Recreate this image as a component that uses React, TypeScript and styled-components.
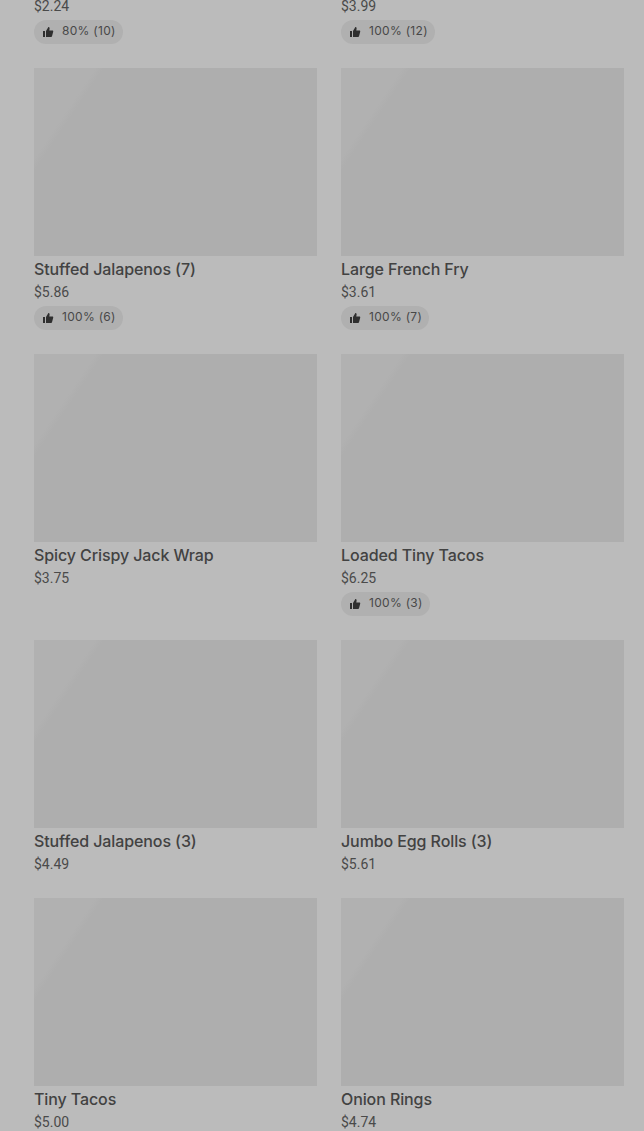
import React from 'react';
import styled, { createGlobalStyle } from 'styled-components';

const GlobalStyle = createGlobalStyle`
    html, body {
        margin: 0;
        padding: 0;
        height: 1131px;
        overflow: hidden;
        background-color: #bbbbbb;
    }
`

const Grid = styled.div`
    display: grid;
    grid-template-columns: 283px 283px;
    column-gap: 24px;
    row-gap: 24px;
    padding-left: 34px;
    margin-top: -4px;
    font-family: Inter, "Liberation Sans", sans-serif;
`

const Card = styled.div`
    display: flex;
    flex-direction: column;
    align-items: flex-start;
`

const Thumb = styled.div`
    width: 283px;
    height: 188px;
    background: linear-gradient(124deg, #b1b1b1 0%, #b1b1b1 15%, #aeaeae 17%, #aeaeae 100%);
`

const Name = styled.div`
    height: 26px;
    line-height: 26px;
    font-size: 16px;
    font-weight: 500;
    letter-spacing: -0.1px;
    color: #424242;
`

const Price = styled.div`
    height: 20px;
    line-height: 20px;
    font-family: Roboto, "Liberation Sans", sans-serif;
    font-size: 14px;
    color: #4a4a4a;
`

const Rating = styled.div`
    display: flex;
    align-items: center;
    gap: 8px;
    height: 24px;
    margin-top: 4px;
    padding: 0 8px 0 8px;
    border-radius: 12px;
    background-color: #b0b0b0;
    font-size: 12px;
    letter-spacing: 0.3px;
    color: #484848;
`

const RatingText = styled.span`
    line-height: 22px;
    margin-bottom: 2px;
    margin-right: -1px;
`

const ThumbIcon = () => (
    <svg width="12" height="12" viewBox="0 0 12 12" fill="#2f2f2f">
        <path d="M1 5h2v6H1z" />
        <path d="M4 5l2.400-4c.8 0 1.300.6 1.200 1.400L7.300 4.500h3.100c.6 0 1 .6.800 1.200l-1.200 4.600c-.1.400-.5.700-.9.700H4z" />
    </svg>
)

const items = [
    { price: '$2.24', rating: '80% (10)' },
    { price: '$3.99', rating: '100% (12)' },
    { name: 'Stuffed Jalapenos (7)', price: '$5.86', rating: '100% (6)' },
    { name: 'Large French Fry', price: '$3.61', rating: '100% (7)' },
    { name: 'Spicy Crispy Jack Wrap', price: '$3.75' },
    { name: 'Loaded Tiny Tacos', price: '$6.25', rating: '100% (3)' },
    { name: 'Stuffed Jalapenos (3)', price: '$4.49' },
    { name: 'Jumbo Egg Rolls (3)', price: '$5.61' },
    { name: 'Tiny Tacos', price: '$5.00' },
    { name: 'Onion Rings', price: '$4.74' },
];

const App: React.FC = () => {
    return <>
        <GlobalStyle />
        <Grid>
            {items.map((item: any, index: number) => {
                return <Card key={index}>
                    {item.name && <Thumb />}
                    {item.name && <Name>{item.name}</Name>}
                    <Price>{item.price}</Price>
                    {item.rating && <Rating><ThumbIcon /><RatingText>{item.rating}</RatingText></Rating>}
                </Card>
            })}
        </Grid>
    </>
}

export default App;
